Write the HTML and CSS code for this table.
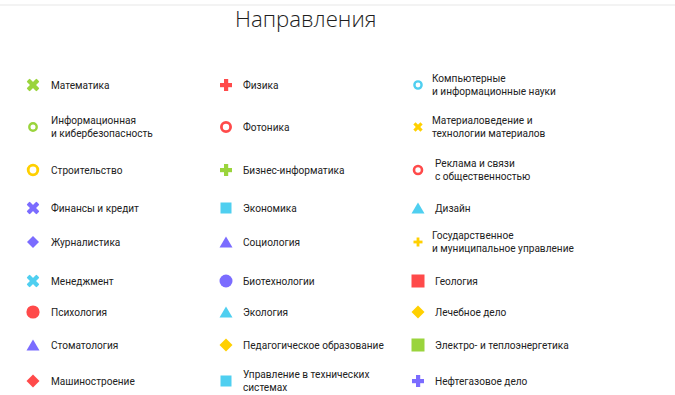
FILE: index.html
```html
<!DOCTYPE html>
<html lang="ru">
<head>
<meta charset="utf-8">
<link rel="stylesheet" href="styles.css">
</head>
<body>
<div class="topbar"></div>
<h1 class="title">Направления</h1>
<div class="grid">
  <!-- row 1 -->
  <div class="item c1"><svg class="ic" viewBox="0 0 14 14"><g transform="rotate(45 7 7)"><rect x="4.8" y="0" width="4.4" height="14" rx="1" fill="#9ad43c"/><rect x="0" y="4.8" width="14" height="4.4" rx="1" fill="#9ad43c"/></g></svg><span>Математика</span></div>
  <div class="item c2"><svg class="ic" viewBox="0 0 14 14"><rect x="5" y="1" width="4.2" height="12" fill="#ff4a4a"/><rect x="1" y="5" width="12" height="4.2" fill="#ff4a4a"/></svg><span>Физика</span></div>
  <div class="item c3"><svg class="ic" viewBox="0 0 14 14"><circle cx="7" cy="7" r="3.6" fill="none" stroke="#4fcff0" stroke-width="2.4"/></svg><span>Компьютерные<br>и информационные науки</span></div>
  <!-- row 2 -->
  <div class="item c1"><svg class="ic" viewBox="0 0 14 14"><circle cx="7" cy="7" r="3.7" fill="none" stroke="#9ad43c" stroke-width="2.4"/></svg><span>Информационная<br>и кибербезопасность</span></div>
  <div class="item c2"><svg class="ic" viewBox="0 0 14 14"><circle cx="7" cy="7" r="4.6" fill="none" stroke="#ff4a4a" stroke-width="2.8"/></svg><span>Фотоника</span></div>
  <div class="item c3"><svg class="ic" viewBox="0 0 14 14"><g transform="rotate(45 7 7)"><rect x="5.4" y="2" width="3.2" height="10" fill="#ffd000"/><rect x="2" y="5.4" width="10" height="3.2" fill="#ffd000"/></g></svg><span>Материаловедение и<br>технологии материалов</span></div>
  <!-- row 3 -->
  <div class="item c1"><svg class="ic" viewBox="0 0 14 14"><circle cx="7" cy="7" r="4.8" fill="none" stroke="#ffd000" stroke-width="2.8"/></svg><span>Строительство</span></div>
  <div class="item c2"><svg class="ic" viewBox="0 0 14 14"><rect x="5" y="1" width="4.2" height="12" fill="#9ad43c"/><rect x="1" y="5" width="12" height="4.2" fill="#9ad43c"/></svg><span>Бизнес-информатика</span></div>
  <div class="item c3"><svg class="ic" viewBox="0 0 14 14"><circle cx="7" cy="7" r="4" fill="none" stroke="#ff4a4a" stroke-width="2.6"/></svg><span class="sh">Реклама и связи<br>с общественностью</span></div>
  <!-- row 4 -->
  <div class="item c1"><svg class="ic" viewBox="0 0 14 14"><g transform="rotate(45 7 7)"><rect x="4.8" y="0" width="4.4" height="14" rx="1" fill="#7b6cff"/><rect x="0" y="4.8" width="14" height="4.4" rx="1" fill="#7b6cff"/></g></svg><span>Финансы и кредит</span></div>
  <div class="item c2"><svg class="ic" viewBox="0 0 14 14"><rect x="1.5" y="1.5" width="11" height="11" fill="#4fcff0"/></svg><span>Экономика</span></div>
  <div class="item c3"><svg class="ic" viewBox="0 0 14 14"><polygon points="7,1.5 13.5,12.5 0.5,12.5" fill="#4fcff0"/></svg><span class="sh">Дизайн</span></div>
  <!-- row 5 -->
  <div class="item c1"><svg class="ic" viewBox="0 0 14 14"><polygon points="7,1 13,7 7,13 1,7" fill="#7b6cff"/></svg><span>Журналистика</span></div>
  <div class="item c2"><svg class="ic" viewBox="0 0 14 14"><polygon points="7,1.5 13.5,12.5 0.5,12.5" fill="#7b6cff"/></svg><span>Социология</span></div>
  <div class="item c3"><svg class="ic" viewBox="0 0 14 14"><rect x="5.6" y="2.5" width="2.8" height="9" fill="#ffd000"/><rect x="2.5" y="5.6" width="9" height="2.8" fill="#ffd000"/></svg><span>Государственное<br>и муниципальное управление</span></div>
  <!-- row 6 -->
  <div class="item c1"><svg class="ic" viewBox="0 0 14 14"><g transform="rotate(45 7 7)"><rect x="4.8" y="0" width="4.4" height="14" rx="1" fill="#4fcff0"/><rect x="0" y="4.8" width="14" height="4.4" rx="1" fill="#4fcff0"/></g></svg><span>Менеджмент</span></div>
  <div class="item c2"><svg class="ic" viewBox="0 0 14 14"><circle cx="7" cy="7" r="6.5" fill="#7b6cff"/></svg><span>Биотехнологии</span></div>
  <div class="item c3"><svg class="ic" viewBox="0 0 14 14"><rect x="0.5" y="0.5" width="13" height="13" fill="#ff4a4a"/></svg><span class="sh">Геология</span></div>
  <!-- row 7 -->
  <div class="item c1"><svg class="ic" viewBox="0 0 14 14"><circle cx="7" cy="7" r="6.6" fill="#ff4a4a"/></svg><span>Психология</span></div>
  <div class="item c2"><svg class="ic" viewBox="0 0 14 14"><polygon points="7,1.5 13.5,12.5 0.5,12.5" fill="#4fcff0"/></svg><span>Экология</span></div>
  <div class="item c3"><svg class="ic" viewBox="0 0 14 14"><polygon points="7,0.5 13.5,7 7,13.5 0.5,7" fill="#ffd000"/></svg><span class="sh">Лечебное дело</span></div>
  <!-- row 8 -->
  <div class="item c1"><svg class="ic" viewBox="0 0 14 14"><polygon points="7,1.5 13.5,12.5 0.5,12.5" fill="#7b6cff"/></svg><span>Стоматология</span></div>
  <div class="item c2"><svg class="ic" viewBox="0 0 14 14"><polygon points="7,0.5 13.5,7 7,13.5 0.5,7" fill="#ffd000"/></svg><span>Педагогическое образование</span></div>
  <div class="item c3"><svg class="ic" viewBox="0 0 14 14"><rect x="0.5" y="0.5" width="13" height="13" fill="#9ad43c"/></svg><span class="sh">Электро- и теплоэнергетика</span></div>
  <!-- row 9 -->
  <div class="item c1"><svg class="ic" viewBox="0 0 14 14"><polygon points="7,0.5 13.5,7 7,13.5 0.5,7" fill="#ff4a4a"/></svg><span>Машиностроение</span></div>
  <div class="item c2"><svg class="ic" viewBox="0 0 14 14"><rect x="1.5" y="1.5" width="11" height="11" fill="#4fcff0"/></svg><span>Управление в технических<br>системах</span></div>
  <div class="item c3"><svg class="ic" viewBox="0 0 14 14"><rect x="5" y="1" width="4.2" height="12" fill="#7b6cff"/><rect x="1" y="5" width="12" height="4.2" fill="#7b6cff"/></svg><span class="sh">Нефтегазовое дело</span></div>
</div>
</body>
</html>
```

FILE: styles.css
```css
html, body {
  margin: 0;
  padding: 0;
  background: #ffffff;
}
body {
  font-family: Roboto, "Liberation Sans", sans-serif;
  color: #222222;
  width: 675px;
  height: 395px;
  overflow: hidden;
}
.topbar {
  margin-top: 4px;
  height: 2px;
  background: #f3f3f3;
}
.title {
  margin: 0;
  padding-left: 235px;
  font-family: "Open Sans", sans-serif;
  font-weight: 300;
  font-size: 22.2px;
  line-height: 26px;
  color: #1e1e1e;
}
.grid {
  margin-top: 32px;
  padding-left: 26px;
  display: grid;
  grid-template-columns: 193px 192px auto;
  grid-template-rows: 42px 42px 44px 32px 36px 42px 20px 46px 26px;
}
.item {
  display: flex;
  align-items: center;
  font-size: 10.1px;
  line-height: 13px;
}
.ic {
  width: 14px;
  height: 14px;
  flex: none;
}
.c1 .ic { margin-right: 11px; }
.c2 .ic { margin-right: 10px; }
.c3 .ic { margin-right: 7px; }
.c3 .sh { margin-left: 3px; }
```
